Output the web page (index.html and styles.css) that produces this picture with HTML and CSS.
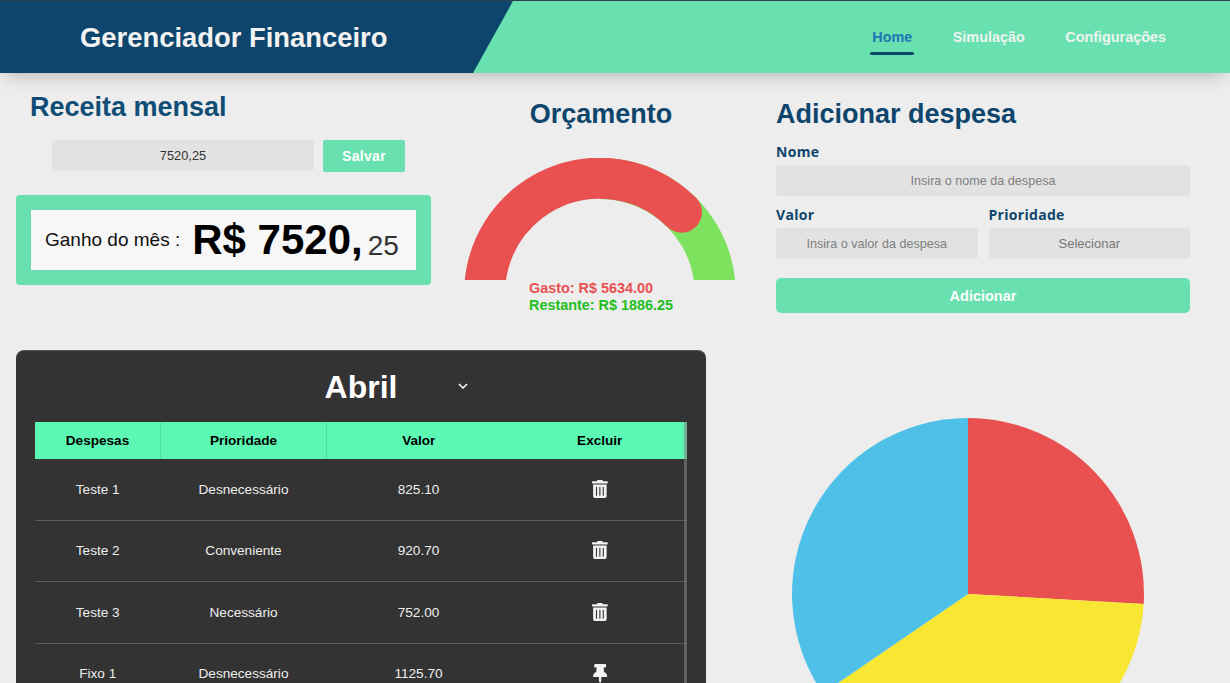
FILE: index.html
```html
<!DOCTYPE html>
<html lang="pt-BR">
<head>
  <meta charset="UTF-8" />
  <meta name="viewport" content="width=device-width, initial-scale=1.0"/>
  <title>Gerenciador Financeiro</title>
  <link rel="stylesheet" href="styles.css">
</head>
<body>

  <!-- Header -->
  <header>
    <div class="brand">
      <span>Gerenciador Financeiro</span>
    </div>
    <nav>
      <a href="#" class="active">Home</a>
      <a href="#">Simulação</a>
      <a href="#">Configurações</a>
    </nav>
  </header>

  <main>
    <div class="top-row">

      <!-- Receita -->
      <section class="income">
        <h2 class="income-title">Receita mensal</h2>
        <div class="income-form">
          <input type="text" class="field income-input" value="7520,25" />
          <button class="btn-save">Salvar</button>
        </div>
        <div class="income-card">
          <div class="income-card-inner">
            <span class="income-label">Ganho do mês :</span>
            <span class="income-value">R$ 7520,</span>
            <span class="income-cents">25</span>
          </div>
        </div>
      </section>

      <!-- Orcamento -->
      <section class="budget">
        <h2 class="budget-title">Orçamento</h2>
        <svg class="gauge" viewBox="0 0 272 122" width="272" height="122">
          <path d="M136 20.5 A115.2 115.2 0 0 1 235.8 193.3" fill="none" stroke="#7de35e" stroke-width="41"/>
          <path d="M36.2 193.3 A115.2 115.2 0 0 1 217.5 54.2" fill="none" stroke="#e95050" stroke-width="41" stroke-linecap="round"/>
        </svg>
        <div class="budget-text">
          <div class="spent">Gasto: R$ 5634.00</div>
          <div class="left">Restante: R$ 1886.25</div>
        </div>
      </section>

      <!-- Adicionar despesa -->
      <section class="expense">
        <h2 class="expense-title">Adicionar despesa</h2>
        <label class="field-label">Nome</label>
        <input type="text" class="field" placeholder="Insira o nome da despesa" />
        <div class="field-row">
          <div class="field-col">
            <label class="field-label">Valor</label>
            <input type="text" class="field" placeholder="Insira o valor da despesa" />
          </div>
          <div class="field-col">
            <label class="field-label">Prioridade</label>
            <select class="field">
              <option>Selecionar</option>
            </select>
          </div>
        </div>
        <button class="btn-add">Adicionar</button>
      </section>
    </div>

    <div class="bottom-row">

      <!-- Tabela -->
      <section class="panel">
        <div class="month">
          <span class="month-name">Abril</span>
          <svg class="month-arrow" viewBox="0 0 10 6" width="10" height="6">
            <path d="M1 1l4 4 4-4" fill="none" stroke="#fff" stroke-width="1.5"/>
          </svg>
        </div>
        <div class="table-wrap">
          <table>
            <thead>
              <tr>
                <th class="col-name">Despesas</th>
                <th class="col-prio">Prioridade</th>
                <th class="col-value">Valor</th>
                <th>Excluir</th>
              </tr>
            </thead>
            <tbody>
              <tr>
                <td>Teste 1</td>
                <td>Desnecessário</td>
                <td>825.10</td>
                <td><svg class="icon" viewBox="0 0 448 512"><path d="M32 464a48 48 0 0 0 48 48h288a48 48 0 0 0 48-48V128H32zm272-256a16 16 0 0 1 32 0v224a16 16 0 0 1-32 0zm-96 0a16 16 0 0 1 32 0v224a16 16 0 0 1-32 0zm-96 0a16 16 0 0 1 32 0v224a16 16 0 0 1-32 0zM432 32H312l-9.4-18.7A24 24 0 0 0 281.1 0H166.8a23.72 23.72 0 0 0-21.4 13.3L136 32H16A16 16 0 0 0 0 48v32a16 16 0 0 0 16 16h416a16 16 0 0 0 16-16V48a16 16 0 0 0-16-16z"/></svg></td>
              </tr>
              <tr>
                <td>Teste 2</td>
                <td>Conveniente</td>
                <td>920.70</td>
                <td><svg class="icon" viewBox="0 0 448 512"><path d="M32 464a48 48 0 0 0 48 48h288a48 48 0 0 0 48-48V128H32zm272-256a16 16 0 0 1 32 0v224a16 16 0 0 1-32 0zm-96 0a16 16 0 0 1 32 0v224a16 16 0 0 1-32 0zm-96 0a16 16 0 0 1 32 0v224a16 16 0 0 1-32 0zM432 32H312l-9.4-18.7A24 24 0 0 0 281.1 0H166.8a23.72 23.72 0 0 0-21.4 13.3L136 32H16A16 16 0 0 0 0 48v32a16 16 0 0 0 16 16h416a16 16 0 0 0 16-16V48a16 16 0 0 0-16-16z"/></svg></td>
              </tr>
              <tr>
                <td>Teste 3</td>
                <td>Necessário</td>
                <td>752.00</td>
                <td><svg class="icon" viewBox="0 0 448 512"><path d="M32 464a48 48 0 0 0 48 48h288a48 48 0 0 0 48-48V128H32zm272-256a16 16 0 0 1 32 0v224a16 16 0 0 1-32 0zm-96 0a16 16 0 0 1 32 0v224a16 16 0 0 1-32 0zm-96 0a16 16 0 0 1 32 0v224a16 16 0 0 1-32 0zM432 32H312l-9.4-18.7A24 24 0 0 0 281.1 0H166.8a23.72 23.72 0 0 0-21.4 13.3L136 32H16A16 16 0 0 0 0 48v32a16 16 0 0 0 16 16h416a16 16 0 0 0 16-16V48a16 16 0 0 0-16-16z"/></svg></td>
              </tr>
              <tr>
                <td>Fixo 1</td>
                <td>Desnecessário</td>
                <td>1125.70</td>
                <td><svg class="icon icon-pin" viewBox="0 0 384 512"><path d="M298.028 214.267L285.793 96H328c13.255 0 24-10.745 24-24V24c0-13.255-10.745-24-24-24H56C42.745 0 32 10.745 32 24v48c0 13.255 10.745 24 24 24h42.207L85.972 214.267C37.465 236.82 0 277.261 0 328c0 13.255 10.745 24 24 24h136v104.007c0 1.242.289 2.467.845 3.578l24 48c2.941 5.882 11.364 5.893 14.311 0l24-48a8.008 8.008 0 0 0 .845-3.578V352h136c13.255 0 24-10.745 24-24-.001-51.183-37.983-91.42-85.973-113.733z"/></svg></td>
              </tr>
            </tbody>
          </table>
          <div class="scroll-track"></div>
        </div>
      </section>

      <!-- Grafico -->
      <svg class="pie" viewBox="0 0 352 352" width="352" height="352">
        <path d="M176 176 L176 0 A176 176 0 0 1 351.7 186 Z" fill="#e95050"/>
        <path d="M176 176 L351.7 186 A176 176 0 0 1 30.8 275.4 Z" fill="#f7e733"/>
        <path d="M176 176 L30.8 275.4 A176 176 0 0 1 176 0 Z" fill="#4fc1e8"/>
      </svg>
    </div>
  </main>

</body>
</html>
```

FILE: styles.css
```css
html, body {
  height: 100vh;
  overflow: hidden;
}

body {
  margin: 0;
  font-family: 'Liberation Sans', Arial, sans-serif;
  background-color: #ededed;
  color: #333;
}

header {
  height: 72px;
  border-top: 1px solid #2f3e4a;
  background-color: #69e0af;
  display: flex;
  justify-content: space-between;
  box-shadow: 0 8px 16px -6px rgba(0,0,0,0.25);
  position: relative;
}

.brand {
  width: 513px;
  background-color: #0e456c;
  clip-path: polygon(0 0, 100% 0, 473px 100%, 0 100%);
  display: flex;
  align-items: center;
  padding-left: 80px;
  box-sizing: border-box;
}

.brand span {
  font-size: 27.4px;
  font-weight: 700;
  color: #f2f2f2;
  padding-top: 1px;
}

nav {
  display: flex;
  gap: 40.5px;
  padding-right: 64px;
}

nav a {
  font-size: 14.4px;
  font-weight: bold;
  color: #eef5f1;
  text-decoration: none;
  padding-top: 28px;
}

nav a.active {
  color: #1f76b4;
  position: relative;
}

nav a.active::after {
  content: '';
  position: absolute;
  left: -2px;
  right: -2px;
  top: 51px;
  height: 3px;
  border-radius: 2px;
  background-color: #0e456c;
}

h2 {
  margin: 0;
  font-size: 27px;
  font-weight: bold;
  color: #0e456c;
}

.top-row {
  display: flex;
  align-items: flex-start;
  height: 277px;
  padding-left: 16px;
}

.income {
  width: 415px;
}

.income-title {
  margin: 19px 0 17px 14px;
  line-height: 31px;
  color: #104d76;
}

.income-form {
  display: flex;
  gap: 9px;
  margin-left: 36px;
}

.field {
  display: block;
  width: 100%;
  box-sizing: border-box;
  height: 31px;
  border: none;
  border-radius: 4px;
  background-color: #e2e2e2;
  font-family: inherit;
  font-size: 12.6px;
  text-align: center;
  color: #777;
  outline: none;
}

.field::placeholder {
  color: #808080;
}

select.field {
  appearance: none;
  font-size: 13px;
  text-align: center;
}

.income-input {
  width: 262px;
  font-size: 12.8px;
  color: #333;
}

.btn-save {
  width: 82px;
  height: 32px;
  border: none;
  border-radius: 2px;
  background-color: #69e0af;
  color: #fff;
  font-family: inherit;
  font-size: 14px;
  font-weight: bold;
  letter-spacing: 0.3px;
}

.income-card {
  margin-top: 23px;
  padding: 15px;
  height: 60px;
  border-radius: 4px;
  background-color: #69e0af;
}

.income-card-inner {
  height: 60px;
  background-color: #f7f7f7;
  display: flex;
  align-items: center;
  padding-left: 14px;
}

.income-label {
  font-size: 19px;
  color: #111;
  margin: 0 12px 1px 0;
}

.income-value {
  font-size: 42px;
  font-weight: bold;
  color: #000;
}

.income-cents {
  font-size: 28px;
  margin: 11px 0 0 5px;
}

.budget {
  width: 272px;
  margin-left: 33px;
}

.budget-title {
  margin-top: 26px;
  padding-left: 2px;
  line-height: 31px;
  text-align: center;
}

.gauge {
  display: block;
  margin-top: 28px;
}

.budget-text {
  width: 146px;
  margin: 0 auto;
  transform: translateX(2px);
  font-size: 14.4px;
  font-weight: bold;
  line-height: 17px;
}

.spent {
  color: #e95050;
}

.left {
  color: #1fbf1f;
}

.expense {
  width: 414px;
  margin-left: 40px;
}

.expense-title {
  margin-top: 26px;
  line-height: 31px;
}

.field-label {
  display: block;
  font-family: 'Open Sans', sans-serif;
  font-size: 14px;
  font-weight: 700;
  line-height: 18px;
  color: #0e456c;
  letter-spacing: 0.3px;
}

.expense-title + .field-label {
  margin-top: 13px;
  margin-bottom: 4px;
}

.field-row {
  display: flex;
  gap: 11px;
  margin-top: 10px;
}

.field-col {
  flex: 1;
}

.field-col .field-label {
  margin-bottom: 4px;
}

.btn-add {
  display: block;
  width: 100%;
  height: 35px;
  margin-top: 19px;
  border: none;
  border-radius: 5px;
  background-color: #69e0af;
  color: #fff;
  font-family: inherit;
  font-size: 14.5px;
  font-weight: bold;
}

.bottom-row {
  display: flex;
  align-items: flex-start;
  padding-left: 16px;
}

.panel {
  width: 690px;
  height: 420px;
  flex-shrink: 0;
  box-sizing: border-box;
  padding: 0 19px;
  border-radius: 8px;
  background-color: #333;
  border-top: 1px solid #555;
}

.month {
  height: 71px;
  display: flex;
  align-items: center;
  justify-content: center;
  position: relative;
}

.month-name {
  font-size: 32px;
  font-weight: bold;
  color: #fff;
  padding-top: 2px;
}

.month-arrow {
  position: absolute;
  left: 423px;
  top: 32px;
}

.table-wrap {
  position: relative;
}

table {
  width: 652px;
  table-layout: fixed;
  border-collapse: collapse;
  font-size: 13.6px;
}

th {
  box-sizing: border-box;
  height: 37px;
  padding: 0;
  background-color: #5bf9b3;
  color: #000;
  font-weight: bold;
}

th.col-name {
  width: 125.5px;
  border-right: 1px solid #54e0a4;
}

th.col-prio {
  width: 166px;
  border-right: 1px solid #54e0a4;
}

th.col-value {
  width: 186px;
}

th:nth-child(3),
td:nth-child(3) {
  padding-right: 2px;
}

td {
  height: 60.5px;
  padding: 0;
  text-align: center;
  color: #eee;
  border-bottom: 1px solid #5a5a5a;
}

.icon {
  display: block;
  height: 18px;
  margin: -1px auto 0;
  fill: #f2f2f2;
}

.icon-pin {
  height: 19px;
}

.scroll-track {
  position: absolute;
  right: 0;
  top: 0;
  bottom: 0;
  width: 3px;
  background-color: rgba(128,128,128,0.6);
}

.pie {
  flex-shrink: 0;
  margin: 68px 0 0 86px;
}
```
